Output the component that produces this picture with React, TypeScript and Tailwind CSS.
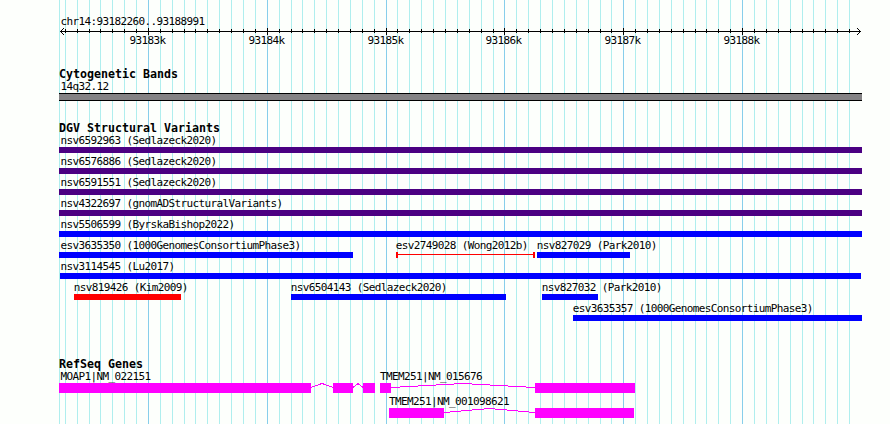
type Feature = {
  label: string;
  start: number;
  end: number;
  color: string;
  labelOffset?: number;
  thin?: boolean;
};

type Gene = {
  label: string;
  labelOffset: number;
  exons: [number, number][];
};

// The drawing area starts at this pixel
const LEFT = 59;

const PURPLE = "bg-[#4b0082]";
const BLUE = "bg-[#0000ff]";
const RED = "bg-[#ff0000]";

const minorLines = [
  59, 65, 77, 89, 100, 112, 124, 136, 160, 172, 184, 195, 207, 219, 231, 243, 255, 279, 291, 302, 314, 326, 338, 350,
  362, 374, 397, 409, 421, 433, 445, 457, 469, 481, 493, 516, 528, 540, 552, 564, 576, 588, 600, 611, 635, 647, 659,
  671, 683, 695, 706, 718, 730, 754, 766, 778, 790, 802, 813, 825, 837, 849,
];

const majorLines = [
  { x: 148, label: "93183k" },
  { x: 267, label: "93184k" },
  { x: 386, label: "93185k" },
  { x: 504, label: "93186k" },
  { x: 623, label: "93187k" },
  { x: 742, label: "93188k" },
];

const variantRows: Feature[][] = [
  [{ label: "nsv6592963 (Sedlazeck2020)", start: 59, end: 862, color: PURPLE, labelOffset: 1.6 }],
  [{ label: "nsv6576886 (Sedlazeck2020)", start: 59, end: 862, color: PURPLE, labelOffset: 1.6 }],
  [{ label: "nsv6591551 (Sedlazeck2020)", start: 59, end: 862, color: PURPLE, labelOffset: 1.6 }],
  [{ label: "nsv4322697 (gnomADStructuralVariants)", start: 59, end: 862, color: PURPLE, labelOffset: 1.6 }],
  [{ label: "nsv5506599 (ByrskaBishop2022)", start: 59, end: 862, color: BLUE, labelOffset: 1.6 }],
  [
    { label: "esv3635350 (1000GenomesConsortiumPhase3)", start: 59, end: 353, color: BLUE, labelOffset: 1.6 },
    { label: "esv2749028 (Wong2012b)", start: 396, end: 535, color: RED, thin: true },
    { label: "nsv827029 (Park2010)", start: 537, end: 630, color: BLUE },
  ],
  [{ label: "nsv3114545 (Lu2017)", start: 60, end: 861, color: BLUE, labelOffset: 0.6 }],
  [
    { label: "nsv819426 (Kim2009)", start: 74, end: 181, color: RED },
    { label: "nsv6504143 (Sedlazeck2020)", start: 291, end: 506, color: BLUE },
    { label: "nsv827032 (Park2010)", start: 542, end: 598, color: BLUE },
  ],
  [{ label: "esv3635357 (1000GenomesConsortiumPhase3)", start: 573, end: 862, color: BLUE }],
];

const geneRows: Gene[][] = [
  [
    { label: "MOAP1|NM_022151", labelOffset: 1.6, exons: [[59, 311], [333, 353], [363, 375]] },
    { label: "TMEM251|NM_015676", labelOffset: 0, exons: [[380, 391], [535, 635]] },
  ],
  [{ label: "TMEM251|NM_001098621", labelOffset: 0, exons: [[389, 444], [535, 634]] }],
];

function GridLines() {
  return (
    <svg className="absolute inset-0" width="890" height="424" shapeRendering="crispEdges">
      {minorLines.map((x) => (
        <rect key={x} x={x} y="0" width="1" height="424" fill="#afeeee" />
      ))}
      {majorLines.map(({ x }) => (
        <rect key={x} x={x} y="0" width="1" height="424" fill="#87ceeb" />
      ))}
    </svg>
  );
}

function Label({ text, offset = 0 }: { text: string; offset?: number }) {
  return (
    <div
      className="h-[13px] text-[11px] leading-[13px] tracking-[-0.622px] whitespace-nowrap"
      style={{ marginLeft: offset }}
    >
      {text}
    </div>
  );
}

function Title({ children }: { children: string }) {
  return <h2 className="h-3 text-[11.63px] leading-3 font-bold whitespace-nowrap">{children}</h2>;
}

function Ruler() {
  return (
    <svg className="-ml-px block" width="806" height="8" viewBox="58 27 806 8" shapeRendering="crispEdges">
      <rect x="60" y="31" width="801" height="1" />
      {minorLines.slice(1).map((x) => (
        <rect key={x} x={x} y="29" width="1" height="4" />
      ))}
      {majorLines.map(({ x }) => (
        <rect key={x} x={x} y="28" width="1" height="7" />
      ))}
      <path d="M61 30h1v1h-1z M62 29h1v1h-1z M63 28h1v1h-1z M61 32h1v1h-1z M62 33h1v1h-1z M63 34h1v1h-1z" />
      <path d="M859 30h1v1h-1z M858 29h1v1h-1z M857 28h1v1h-1z M859 32h1v1h-1z M858 33h1v1h-1z M857 34h1v1h-1z" />
    </svg>
  );
}

function FeatureBar({ feature, prevEnd }: { feature: Feature; prevEnd: number }) {
  const { label, start, end, color, labelOffset = -0.2, thin } = feature;
  return (
    <div className="shrink-0" style={{ marginLeft: start - prevEnd, width: end - start }}>
      <Label text={label} offset={labelOffset} />
      {thin ? (
        <div className="flex h-1.5">
          <div className={`w-0.5 ${color}`} />
          <div className={`mt-0.5 h-px flex-1 ${color}`} />
          <div className={`w-0.5 ${color}`} />
        </div>
      ) : (
        <div className={`h-1.5 ${color}`} />
      )}
    </div>
  );
}

function Intron({ width }: { width: number }) {
  return (
    <svg className="block shrink-0" width={width} height="10" shapeRendering="crispEdges">
      <polyline points={`0,4.5 ${width / 2},0.5 ${width},4.5`} fill="none" stroke="#ff00ff" />
    </svg>
  );
}

function GeneModel({ gene, prevEnd }: { gene: Gene; prevEnd: number }) {
  const { label, labelOffset, exons } = gene;
  const start = exons[0][0];
  const end = exons[exons.length - 1][1];
  return (
    <div className="shrink-0" style={{ marginLeft: start - prevEnd, width: end - start }}>
      <Label text={label} offset={labelOffset} />
      <div className="flex h-2.5">
        {exons.map(([from, to], i) => (
          <div key={from} className="flex shrink-0">
            {i > 0 && <Intron width={from - exons[i - 1][1]} />}
            <div className="h-2.5 bg-[#ff00ff]" style={{ width: to - from }} />
          </div>
        ))}
      </div>
    </div>
  );
}

export default function App() {
  return (
    <div className="relative h-[424px] w-[890px] overflow-hidden bg-[#fdfffc] font-['DejaVu_Sans_Mono',monospace] text-black">
      <GridLines />
      <main className="relative flex flex-col pt-[15px] pl-[59px]">
        <Label text="chr14:93182260..93188991" offset={1.6} />
        <div className="-mt-px">
          <Ruler />
        </div>
        <div className="-mt-px flex">
          {majorLines.map(({ x, label }, i) => (
            <div
              key={x}
              className="w-9 shrink-0"
              style={{ marginLeft: i === 0 ? x - 19 - LEFT : x - majorLines[i - 1].x - 36 }}
            >
              <Label text={label} offset={0.6} />
            </div>
          ))}
        </div>

        <section className="mt-[21px]">
          <Title>Cytogenetic Bands</Title>
          <Label text="14q32.12" offset={1.6} />
          <div className="h-2 w-[803px] border-y border-black bg-[#848284]" />
        </section>

        <section className="mt-[21px]">
          <Title>DGV Structural Variants</Title>
          <div className="flex flex-col gap-0.5">
            {variantRows.map((row, r) => (
              <div key={r} className="flex">
                {row.map((feature, i) => (
                  <FeatureBar key={feature.label} feature={feature} prevEnd={i > 0 ? row[i - 1].end : LEFT} />
                ))}
              </div>
            ))}
          </div>
        </section>

        <section className="mt-[37px]">
          <Title>RefSeq Genes</Title>
          <div className="flex flex-col gap-0.5">
            {geneRows.map((row, r) => (
              <div key={r} className="flex">
                {row.map((gene, i) => (
                  <GeneModel
                    key={gene.label}
                    gene={gene}
                    prevEnd={i > 0 ? row[i - 1].exons[row[i - 1].exons.length - 1][1] : LEFT}
                  />
                ))}
              </div>
            ))}
          </div>
        </section>
      </main>
    </div>
  );
}
